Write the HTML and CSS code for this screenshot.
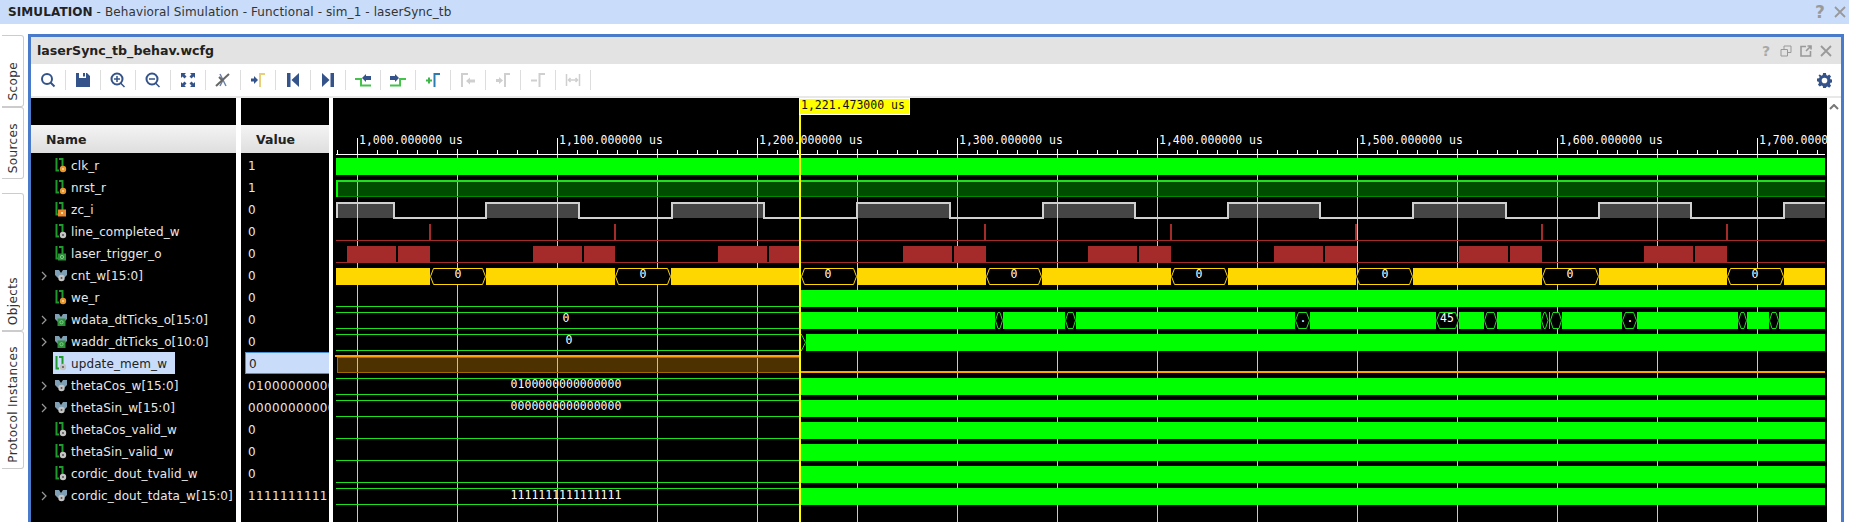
FILE: index.html
```html
<!DOCTYPE HTML>
<html>
<head>
<meta name="viewport" content="width=device-width, initial-scale=1">
<title>SIMULATION - laserSync_tb</title>
<link rel="stylesheet" href="styles.css">
</head>
<body>

<svg class="defs">
  <symbol id="sig" viewBox="0 0 14 16">
    <path d="M2.5 0v12.500H5M5 1h3.500v8" fill="none" stroke="#1f9a2c" stroke-width="2"/>
  </symbol>
  <symbol id="reg" viewBox="0 0 14 16">
    <use href="#sig" width="14" height="16"/>
    <circle cx="9" cy="11" r="3.2" fill="#e8962e"/><circle cx="9" cy="11" r="1" fill="#ffd9a0"/>
  </symbol>
  <symbol id="inp" viewBox="0 0 14 16">
    <use href="#sig" width="14" height="16"/>
    <rect x="4" y="7.5" width="8" height="7" fill="#e8862e"/><rect x="7" y="10" width="2" height="2" fill="#ffd9a0"/>
  </symbol>
  <symbol id="wire" viewBox="0 0 14 16">
    <use href="#sig" width="14" height="16"/>
    <circle cx="9" cy="11" r="3.2" fill="#c4c4c4"/><circle cx="9" cy="11" r="1" fill="#555"/>
  </symbol>
  <symbol id="out" viewBox="0 0 14 16">
    <use href="#sig" width="14" height="16"/>
    <rect x="4" y="7.5" width="8" height="7" fill="#2f8f3a"/><circle cx="8" cy="11" r="1.6" fill="none" stroke="#7fd08a"/>
  </symbol>
  <symbol id="bus" viewBox="0 0 14 16">
    <path d="M1 2h4l2 3 2-3h4v5l-3 3H4L1 7z" fill="#7fa0b4"/>
  </symbol>
  <symbol id="bus-wire" viewBox="0 0 14 16">
    <use href="#bus" width="14" height="16"/>
    <circle cx="7.5" cy="10" r="3.2" fill="#c4c4c4"/><circle cx="7.5" cy="10" r="1" fill="#555"/>
  </symbol>
  <symbol id="bus-out" viewBox="0 0 14 16">
    <use href="#bus" width="14" height="16"/>
    <rect x="3.5" y="6.5" width="8" height="7.5" fill="#2f8f3a"/><circle cx="7.5" cy="10.2" r="1.6" fill="none" stroke="#7fd08a"/>
  </symbol>
  <symbol id="chev" viewBox="0 0 6 10">
    <path d="M1 1l4 4-4 4" fill="none" stroke="#999" stroke-width="1.2"/>
  </symbol>
</svg>

<div class="topbar">
  <div class="topbar-title"><b>SIMULATION</b> - Behavioral Simulation - Functional - sim_1 - laserSync_tb</div>
  <div class="wincontrols">
    <span class="qmark big">?</span>
    <svg class="xicon" viewBox="0 0 12 12"><path d="M1 1l10 10M11 1L1 11"/></svg>
  </div>
</div>

<div class="main">
  <div class="tabs">
    <div class="tab tab-short"><span>Scope</span></div>
    <div class="tab tab-short tab-last"><span>Sources</span></div>
    <div class="tab tab-long"><span>Objects</span></div>
    <div class="tab tab-long"><span>Protocol Instances</span></div>
  </div>

  <div class="window">
    <div class="titlebar">
      <div class="filename">laserSync_tb_behav.wcfg</div>
      <div class="wincontrols small">
        <span class="qmark">?</span>
        <svg class="frameicon" viewBox="0 0 12 12"><path d="M1 4.5h6.5V11H1zM4 4.5V1h7v6.5H7.5"/></svg>
        <svg class="frameicon thick" viewBox="0 0 12 12"><path d="M6 1.5H1V11h9.5V6M6 6l5-5M7.5 1H11v3.5"/></svg>
        <svg class="xicon" viewBox="0 0 12 12"><path d="M1 1l10 10M11 1L1 11"/></svg>
      </div>
    </div>

    <div class="toolbar">
      <div class="tool"><svg viewBox="0 0 16 16"><circle cx="7" cy="7" r="5" class="ln"/><path d="M10.5 10.5l4 4" class="ln"/></svg></div>
      <div class="tool"><svg viewBox="0 0 16 16"><path d="M1 1h3v5h7V1h1l3 3v11H1z" class="fl"/><rect x="8" y="1" width="2" height="3.500" class="fl"/></svg></div>
      <div class="tool"><svg viewBox="0 0 16 16"><circle cx="7" cy="7" r="5.500" class="ln"/><path d="M10.500 11l4 4M4 7h6M7 4v6" class="ln thin"/></svg></div>
      <div class="tool"><svg viewBox="0 0 16 16"><circle cx="7" cy="7" r="5.500" class="ln"/><path d="M10.500 11l4 4M4 7h6" class="ln thin"/></svg></div>
      <div class="tool"><svg viewBox="0 0 16 16"><path d="M1 1h5L4.500 2.500 6.500 4.500 4.500 6.500 2.500 4.500 1 6zM15 1v5l-1.500-1.500-2 2-2-2 2-2L10 1zM1 15v-5l1.500 1.500 2-2 2 2-2 2L6 15zM15 15h-5l1.500-1.500-2-2 2-2 2 2L15 10z" class="fl"/></svg></div>
      <div class="tool"><svg viewBox="0 0 16 16"><path d="M5 2l3 6 3 6M8 8l-3 6" class="ln navy thin"/><path d="M1 14L14 2" class="ln grey"/><path d="M4 5l3 3" class="ln grey"/></svg></div>
      <div class="tool"><svg viewBox="0 0 16 16"><path d="M1 6.500h3V4l4 4-4 4V9.500H1z" class="fl"/><path d="M10 15V2h5" class="ln yellow"/></svg></div>
      <div class="tool"><svg viewBox="0 0 16 16"><rect x="2" y="1" width="3.500" height="14" class="fl"/><path d="M14 1v14L6.500 8z" class="fl"/></svg></div>
      <div class="tool"><svg viewBox="0 0 16 16"><path d="M2 1v14L9.500 8z" class="fl"/><rect x="10.500" y="1" width="3.500" height="14" class="fl"/></svg></div>
      <div class="tool"><svg viewBox="0 0 16 16"><path d="M0 7h6v6.500h10" class="ln green"/><path d="M7 6l4-4v2h5v4h-5v2z" class="fl"/></svg></div>
      <div class="tool"><svg viewBox="0 0 16 16"><path d="M0 13.500h10V7h6" class="ln green"/><path d="M9 6L5 2v2H0v4h5v2z" class="fl"/></svg></div>
      <div class="tool"><svg viewBox="0 0 16 16"><path d="M1 8.500h6M4 5.500v6" class="ln bright"/><path d="M9.500 15V2H15" class="ln teal"/></svg></div>
      <div class="tool"><svg viewBox="0 0 16 16"><path d="M2 15V2h6" class="ln off"/><path d="M6 9l4-3.500V7.500h5v3h-5v2z" class="fl off"/></svg></div>
      <div class="tool"><svg viewBox="0 0 16 16"><path d="M1 7h3V5l4 3.500L4 12v-2H1z" class="fl off"/><path d="M10 15V2h5" class="ln off"/></svg></div>
      <div class="tool"><svg viewBox="0 0 16 16"><path d="M1 8.500h6" class="ln off"/><path d="M9.500 15V2H15" class="ln off"/></svg></div>
      <div class="tool"><svg viewBox="0 0 16 16"><path d="M1.500 2v12M14.500 2v12M4 8h8M5.500 6L3.500 8l2 2M10.500 6l2 2-2 2" class="ln off thin"/></svg></div>
      <div class="toolbar-end">
        <svg class="gear" viewBox="0 0 16 16"><path d="M6.500 0h3l.4 2.200 1.300.6L13 1.500l2 2.100-1.200 1.800.6 1.300 2.200.4v3l-2.200.4-.6 1.300 1.200 1.800-2 2.100-1.800-1.300-1.300.6L9.500 16h-3l-.4-2.200-1.300-.6L3 14.500l-2-2.100 1.200-1.800-.6-1.300L0 8.900v-3l2.200-.4.6-1.300L1.600 2.400 3 1.500l1.800 1.300 1.300-.6zM8 5a3 3 0 100 6 3 3 0 000-6z" class="fl" fill-rule="evenodd"/></svg>
      </div>
    </div>

    <div class="content">
      <div class="col col-name">
        <div class="colhead">Name</div>
        <div class="row"><span class="exp"></span><span class="item"><svg class="sicon"><use href="#reg"/></svg>clk_r</span></div>
        <div class="row"><span class="exp"></span><span class="item"><svg class="sicon"><use href="#reg"/></svg>nrst_r</span></div>
        <div class="row"><span class="exp"></span><span class="item"><svg class="sicon"><use href="#inp"/></svg>zc_i</span></div>
        <div class="row"><span class="exp"></span><span class="item"><svg class="sicon"><use href="#wire"/></svg>line_completed_w</span></div>
        <div class="row"><span class="exp"></span><span class="item"><svg class="sicon"><use href="#out"/></svg>laser_trigger_o</span></div>
        <div class="row"><span class="exp"><svg class="chev"><use href="#chev"/></svg></span><span class="item"><svg class="sicon"><use href="#bus-wire"/></svg>cnt_w[15:0]</span></div>
        <div class="row"><span class="exp"></span><span class="item"><svg class="sicon"><use href="#reg"/></svg>we_r</span></div>
        <div class="row"><span class="exp"><svg class="chev"><use href="#chev"/></svg></span><span class="item"><svg class="sicon"><use href="#bus-out"/></svg>wdata_dtTicks_o[15:0]</span></div>
        <div class="row"><span class="exp"><svg class="chev"><use href="#chev"/></svg></span><span class="item"><svg class="sicon"><use href="#bus-out"/></svg>waddr_dtTicks_o[10:0]</span></div>
        <div class="row selected"><span class="exp"></span><span class="item"><svg class="sicon"><use href="#wire"/></svg>update_mem_w</span></div>
        <div class="row"><span class="exp"><svg class="chev"><use href="#chev"/></svg></span><span class="item"><svg class="sicon"><use href="#bus-wire"/></svg>thetaCos_w[15:0]</span></div>
        <div class="row"><span class="exp"><svg class="chev"><use href="#chev"/></svg></span><span class="item"><svg class="sicon"><use href="#bus-wire"/></svg>thetaSin_w[15:0]</span></div>
        <div class="row"><span class="exp"></span><span class="item"><svg class="sicon"><use href="#wire"/></svg>thetaCos_valid_w</span></div>
        <div class="row"><span class="exp"></span><span class="item"><svg class="sicon"><use href="#wire"/></svg>thetaSin_valid_w</span></div>
        <div class="row"><span class="exp"></span><span class="item"><svg class="sicon"><use href="#wire"/></svg>cordic_dout_tvalid_w</span></div>
        <div class="row"><span class="exp"><svg class="chev"><use href="#chev"/></svg></span><span class="item"><svg class="sicon"><use href="#bus-wire"/></svg>cordic_dout_tdata_w[15:0]</span></div>
      </div>

      <div class="col col-value">
        <div class="colhead">Value</div>
        <div class="val">1</div>
        <div class="val">1</div>
        <div class="val">0</div>
        <div class="val">0</div>
        <div class="val">0</div>
        <div class="val">0</div>
        <div class="val">0</div>
        <div class="val">0</div>
        <div class="val">0</div>
        <div class="val val-selected">0</div>
        <div class="val">0100000000000000</div>
        <div class="val">0000000000000000</div>
        <div class="val">0</div>
        <div class="val">0</div>
        <div class="val">0</div>
        <div class="val">1111111111111111</div>
      </div>

      <!-- viewBox uses the page's own coordinates, so x/y below read straight off the screenshot -->
      <svg class="wave" viewBox="333 98 1494 424" shape-rendering="crispEdges">
        <defs>
          <pattern id="grid" patternUnits="userSpaceOnUse" x="357" y="0" width="100" height="10"><rect width="1" height="10" fill="#c8c8c8"/></pattern>
          <pattern id="tick-minor" patternUnits="userSpaceOnUse" x="337" y="0" width="20" height="10"><rect width="1" height="10" fill="#fff"/></pattern>
          <pattern id="tick-mid" patternUnits="userSpaceOnUse" x="357" y="0" width="100" height="10"><rect width="1" height="10" fill="#fff"/></pattern>
          <pattern id="tick-major" patternUnits="userSpaceOnUse" x="357" y="0" width="200" height="10"><rect width="1" height="10" fill="#fff"/></pattern>
        </defs>

        <!-- ruler -->
        <rect x="336" y="154" width="1489" height="1" fill="#fff"/>
        <rect x="336" y="150" width="1489" height="4" fill="url(#tick-minor)"/>
        <rect x="336" y="149" width="1489" height="5" fill="url(#tick-mid)"/>
        <rect x="336" y="138" width="1489" height="16" fill="url(#tick-major)"/>
        <g class="rulertext">
          <text x="359" y="144">1,000.000000 us</text>
          <text x="559" y="144">1,100.000000 us</text>
          <text x="759" y="144">1,200.000000 us</text>
          <text x="959" y="144">1,300.000000 us</text>
          <text x="1159" y="144">1,400.000000 us</text>
          <text x="1359" y="144">1,500.000000 us</text>
          <text x="1559" y="144">1,600.000000 us</text>
          <text x="1759" y="144">1,700.000000 us</text>
        </g>

        <rect x="336" y="155" width="1489" height="367" fill="url(#grid)"/>

        <!-- clk_r -->
        <rect x="336" y="158" width="1489" height="17" class="hi"/>

        <!-- nrst_r -->
        <rect x="336" y="180" width="1489" height="17" class="hi-dim"/>
        <rect x="336" y="180" width="1489" height="2" class="lo"/>
        <rect x="336" y="196" width="1489" height="1" fill="#008a00"/>
        <rect x="336" y="180" width="2" height="17" class="hi"/>

        <!-- zc_i -->
        <path class="zc-fill" d="M337 218V203H394V218ZM486 218V203H579V218ZM672 218V203H764V218ZM857 218V203H950V218ZM1043 218V203H1135V218ZM1228 218V203H1320V218ZM1413 218V203H1506V218ZM1599 218V203H1691V218ZM1784 218V203H1825V218Z"/>
        <path class="zc-line" d="M337 218V203H394V218H486V203H579V218H672V203H764V218H857V203H950V218H1043V203H1135V218H1228V203H1320V218H1413V203H1506V218H1599V203H1691V218H1784V203H1825"/>

        <!-- line_completed_w -->
        <g class="maroon">
          <rect x="336" y="240" width="1489" height="1"/>
          <rect x="429" y="224" width="2" height="16"/>
          <rect x="614" y="224" width="2" height="16"/>
          <rect x="799" y="224" width="2" height="16"/>
          <rect x="984" y="224" width="2" height="16"/>
          <rect x="1170" y="224" width="2" height="16"/>
          <rect x="1355" y="224" width="2" height="16"/>
          <rect x="1541" y="224" width="2" height="16"/>
          <rect x="1726" y="224" width="2" height="16"/>
        </g>

        <!-- laser_trigger_o -->
        <g class="maroon">
          <rect x="336" y="262" width="1489" height="1"/>
          <rect x="347" y="246" width="49" height="16"/><rect x="398" y="246" width="32" height="16"/>
          <rect x="533" y="246" width="49" height="16"/><rect x="584" y="246" width="31" height="16"/>
          <rect x="718" y="246" width="49" height="16"/><rect x="769" y="246" width="31" height="16"/>
          <rect x="903" y="246" width="49" height="16"/><rect x="954" y="246" width="32" height="16"/>
          <rect x="1088" y="246" width="49" height="16"/><rect x="1139" y="246" width="32" height="16"/>
          <rect x="1274" y="246" width="49" height="16"/><rect x="1325" y="246" width="32" height="16"/>
          <rect x="1459" y="246" width="49" height="16"/><rect x="1510" y="246" width="32" height="16"/>
          <rect x="1644" y="246" width="49" height="16"/><rect x="1695" y="246" width="32" height="16"/>
        </g>

        <!-- cnt_w -->
        <g class="bus-yellow">
          <rect x="336" y="268" width="94" height="17"/>
          <rect x="486" y="268" width="129" height="17"/>
          <rect x="671" y="268" width="129" height="17"/>
          <rect x="857" y="268" width="129" height="17"/>
          <rect x="1042" y="268" width="129" height="17"/>
          <rect x="1228" y="268" width="128" height="17"/>
          <rect x="1413" y="268" width="129" height="17"/>
          <rect x="1599" y="268" width="128" height="17"/>
          <rect x="1784" y="268" width="41" height="17"/>
        </g>
        <g class="hex-yellow" shape-rendering="auto">
          <polygon points="430.500,276.500 433.500,268.500 482.500,268.500 485.500,276.500 482.500,284.500 433.500,284.500"/>
          <polygon points="615.500,276.500 618.500,268.500 667.500,268.500 670.500,276.500 667.500,284.500 618.500,284.500"/>
          <polygon points="801.500,276.500 804.500,268.500 853.500,268.500 856.500,276.500 853.500,284.500 804.500,284.500"/>
          <polygon points="986.500,276.500 989.500,268.500 1038.500,268.500 1041.500,276.500 1038.500,284.500 989.500,284.500"/>
          <polygon points="1171.500,276.500 1174.500,268.500 1224.500,268.500 1227.500,276.500 1224.500,284.500 1174.500,284.500"/>
          <polygon points="1356.500,276.500 1359.500,268.500 1409.500,268.500 1412.500,276.500 1409.500,284.500 1359.500,284.500"/>
          <polygon points="1542.500,276.500 1545.500,268.500 1595.500,268.500 1598.500,276.500 1595.500,284.500 1545.500,284.500"/>
          <polygon points="1727.500,276.500 1730.500,268.500 1780.500,268.500 1783.500,276.500 1780.500,284.500 1730.500,284.500"/>
        </g>
        <g class="bustext">
          <text x="458" y="278">0</text>
          <text x="643" y="278">0</text>
          <text x="828" y="278">0</text>
          <text x="1014" y="278">0</text>
          <text x="1199" y="278">0</text>
          <text x="1385" y="278">0</text>
          <text x="1570" y="278">0</text>
          <text x="1755" y="278">0</text>
        </g>

        <!-- we_r -->
        <rect x="336" y="306" width="464" height="1" class="lo"/>
        <rect x="801" y="290" width="1024" height="17" class="hi"/>

        <!-- wdata_dtTicks_o -->
        <rect x="336" y="312" width="463" height="1" class="lo"/>
        <rect x="336" y="328" width="463" height="1" class="lo"/>
        <g class="hi">
          <rect x="801" y="312" width="194" height="17"/>
          <rect x="1003" y="312" width="62" height="17"/>
          <rect x="1076" y="312" width="219" height="17"/>
          <rect x="1310" y="312" width="126" height="17"/>
          <rect x="1459" y="312" width="25" height="17"/>
          <rect x="1497" y="312" width="44" height="17"/>
          <rect x="1549" y="312" width="1" height="17"/>
          <rect x="1562" y="312" width="60" height="17"/>
          <rect x="1637" y="312" width="101" height="17"/>
          <rect x="1747" y="312" width="22" height="17"/>
          <rect x="1779" y="312" width="46" height="17"/>
        </g>
        <g class="hex-green" shape-rendering="auto">
          <polygon points="995.500,320.500 998,312.500 1000,312.500 1002.500,320.500 1000,328.500 998,328.500"/>
          <polygon points="1065.500,320.500 1068,312.500 1073,312.500 1075.500,320.500 1073,328.500 1068,328.500"/>
          <polygon points="1295.500,320.500 1298.500,312.500 1306.500,312.500 1309.500,320.500 1306.500,328.500 1298.500,328.500"/>
          <polygon points="1436.500,320.500 1439.500,312.500 1455.500,312.500 1458.500,320.500 1455.500,328.500 1439.500,328.500"/>
          <polygon points="1484.500,320.500 1487,312.500 1494,312.500 1496.500,320.500 1494,328.500 1487,328.500"/>
          <polygon points="1541.500,320.500 1544,312.500 1545.500,312.500 1548,320.500 1545.500,328.500 1544,328.500"/>
          <polygon points="1550.500,320.500 1553,312.500 1559,312.500 1561.500,320.500 1559,328.500 1553,328.500"/>
          <polygon points="1622.500,320.500 1625.500,312.500 1633.500,312.500 1636.500,320.500 1633.500,328.500 1625.500,328.500"/>
          <polygon points="1738.500,320.500 1741,312.500 1744,312.500 1746.500,320.500 1744,328.500 1741,328.500"/>
          <polygon points="1769.500,320.500 1772,312.500 1776,312.500 1778.500,320.500 1776,328.500 1772,328.500"/>
        </g>
        <g class="bustext">
          <text x="566" y="322">0</text>
          <text x="1303" y="322">.</text>
          <text x="1447" y="322">45</text>
          <text x="1630" y="322">.</text>
        </g>

        <!-- waddr_dtTicks_o -->
        <rect x="336" y="334" width="466" height="1" class="lo"/>
        <rect x="336" y="350" width="466" height="1" class="lo"/>
        <path class="hex-tail" d="M801.500 334.500L805.500 342.500L801.500 350.500" shape-rendering="auto"/>
        <rect x="806" y="334" width="1019" height="17" class="hi"/>
        <text class="bustext" x="569" y="344">0</text>

        <!-- update_mem_w -->
        <rect x="337.500" y="357.500" width="462" height="15" class="sel-fill"/>
        <rect x="335" y="355" width="465" height="2" class="sel-line"/>
        <rect x="801" y="371" width="1024" height="2" class="sel-line"/>

        <!-- thetaCos_w, thetaSin_w -->
        <rect x="336" y="378" width="464" height="1" class="lo"/>
        <rect x="336" y="394" width="464" height="1" class="lo"/>
        <rect x="801" y="378" width="1024" height="17" class="hi"/>
        <text class="bustext" x="566" y="388">0100000000000000</text>
        <rect x="336" y="400" width="464" height="1" class="lo"/>
        <rect x="336" y="416" width="464" height="1" class="lo"/>
        <rect x="801" y="400" width="1024" height="17" class="hi"/>
        <text class="bustext" x="566" y="410">0000000000000000</text>

        <!-- valid flags -->
        <rect x="336" y="438" width="464" height="1" class="lo"/>
        <rect x="801" y="422" width="1024" height="17" class="hi"/>
        <rect x="336" y="460" width="464" height="1" class="lo"/>
        <rect x="801" y="444" width="1024" height="17" class="hi"/>
        <rect x="336" y="482" width="464" height="1" class="lo"/>
        <rect x="801" y="466" width="1024" height="17" class="hi"/>

        <!-- cordic_dout_tdata_w -->
        <rect x="336" y="488" width="464" height="1" class="lo"/>
        <rect x="336" y="504" width="464" height="1" class="lo"/>
        <rect x="801" y="488" width="1024" height="17" class="hi"/>
        <text class="bustext" x="566" y="499">1111111111111111</text>

        <!-- cursor -->
        <rect x="799" y="98" width="2" height="424" fill="#ffff00"/>
        <rect x="799.500" y="98.500" width="110" height="16" class="cursor-tag"/>
        <text class="cursor-text" x="801" y="109">1,221.473000 us</text>
      </svg>

      <div class="scrollbar">
        <svg viewBox="0 0 10 6"><path d="M1 5l4-4 4 4"/></svg>
      </div>
    </div>
  </div>
</div>

</body>
</html>
```

FILE: styles.css
```css
body {
  margin: 0;
  height: 522px;
  overflow: hidden;
  background: #fff;
  font-family: "DejaVu Sans", sans-serif;
  font-size: 12px;
  color: #333;
}
.defs {
  display: none;
}
.topbar {
  height: 24px;
  background: #c9ddfb;
  display: flex;
  align-items: center;
  justify-content: space-between;
  padding: 0 3px 0 8px;
}
.topbar-title {
  letter-spacing: 0.1px;
}
.topbar-title b {
  color: #222;
}
.wincontrols {
  display: flex;
  align-items: center;
  gap: 8px;
}
.wincontrols.small {
  gap: 8px;
  margin-right: 9px;
}
.qmark {
  width: 12px;
  text-align: center;
  font-weight: bold;
  font-size: 14px;
  color: #a8a8a8;
}
.qmark.big {
  font-size: 17px;
  color: #999;
}
.xicon {
  width: 12px;
  height: 12px;
  fill: none;
  stroke: #999;
  stroke-width: 1.8;
}
.frameicon {
  width: 12px;
  height: 12px;
  fill: none;
  stroke: #999;
  stroke-width: 1;
}
.frameicon.thick {
  stroke-width: 1.6;
}

.main {
  display: flex;
  padding-top: 10px;
  height: 488px;
}
.tabs {
  width: 22px;
  margin: 1px 4px 0 2px;
  display: flex;
  flex-direction: column;
}
.tab {
  box-sizing: border-box;
  display: flex;
  align-items: flex-end;
  justify-content: center;
  padding-bottom: 5px;
  background: #fff;
  border: 1px solid #ccc;
  border-left: none;
  border-radius: 0 3px 3px 0;
  letter-spacing: 0.4px;
}
.tab span {
  writing-mode: vertical-rl;
  transform: rotate(180deg);
}
.tab-short {
  height: 72px;
}
.tab-last {
  margin-bottom: 14px;
}
.tab-long {
  height: 138px;
}

.window {
  width: 1810px;
  border: solid #4a7bcb;
  border-width: 3px 3px 0;
  display: flex;
  flex-direction: column;
}
.titlebar {
  height: 27px;
  flex: none;
  background: #e3e3e3;
  display: flex;
  align-items: center;
  justify-content: space-between;
}
.filename {
  padding-left: 6px;
  font-size: 12.6px;
  font-weight: bold;
  color: #222;
}
.toolbar {
  height: 32px;
  flex: none;
  display: flex;
  align-items: center;
  border-bottom: 2px solid #e8e8e8;
}
.tool {
  box-sizing: border-box;
  width: 35px;
  height: 20px;
  border-right: 1px solid #ddd;
  display: flex;
  align-items: center;
  justify-content: center;
}
.tool svg {
  width: 16px;
  height: 16px;
}
.toolbar-end {
  margin-left: auto;
  margin-right: 9px;
  display: flex;
}
.gear {
  width: 15px;
  height: 15px;
}
.fl {
  fill: #34538a;
}
.fl.off {
  fill: #cfcfcf;
}
.ln {
  fill: none;
  stroke: #34538a;
  stroke-width: 2;
}
.ln.thin {
  stroke-width: 1.5;
}
.ln.navy {
  stroke: #6f83a8;
}
.ln.grey {
  stroke: #666;
}
.ln.yellow {
  stroke: #e8cf78;
}
.ln.green {
  stroke: #45c24a;
}
.ln.bright {
  stroke: #3db54a;
}
.ln.teal {
  stroke: #2a7cb0;
}
.ln.off {
  stroke: #cfcfcf;
}

.content {
  flex: 1;
  display: flex;
  min-height: 0;
}
.col {
  background: #000;
  color: #e8e8e8;
  padding-top: 27px;
}
.col-name {
  width: 205px;
  margin-right: 5px;
}
.col-value {
  width: 88px;
  margin-right: 4px;
}
.colhead {
  height: 28px;
  margin-bottom: 1px;
  padding-left: 15px;
  display: flex;
  align-items: center;
  font-size: 12.5px;
  font-weight: bold;
  color: #222;
  background: linear-gradient(#f4f4f4, #dedede);
}
.row {
  height: 22px;
  display: flex;
  align-items: center;
  padding-left: 10px;
  white-space: nowrap;
  letter-spacing: 0.1px;
}
.exp {
  width: 12px;
  flex: none;
  display: flex;
  padding-top: 2px;
}
.chev {
  width: 6px;
  height: 10px;
}
.item {
  box-sizing: border-box;
  height: 22px;
  display: flex;
  align-items: center;
  padding: 2px 8px 0 1px;
}
.sicon {
  width: 14px;
  height: 16px;
  margin-right: 3px;
  flex: none;
}
.selected .item {
  background: #c9ddfb;
  color: #222;
}
.val {
  height: 22px;
  line-height: 24px;
  padding-left: 7px;
  overflow: hidden;
  white-space: nowrap;
  letter-spacing: 0.35px;
}
.val-selected {
  box-sizing: border-box;
  margin-left: 4px;
  padding-left: 3px;
  line-height: 22px;
  color: #222;
  background: #c9ddfb;
  border: solid #4a8fd6;
  border-width: 1px 0 1px 1px;
}

.wave {
  width: 1494px;
  height: 424px;
  flex: none;
  background: #000;
}
.rulertext text, .bustext, .bustext text {
  font-family: "DejaVu Sans Mono", monospace;
  font-size: 11.5px;
  fill: #fff;
}
.bustext, .bustext text {
  text-anchor: middle;
}
.hi {
  fill: #00ff00;
}
.lo {
  fill: #1fe01f;
}
.hi-dim {
  fill: rgba(0, 255, 0, 0.3);
}
.zc-fill {
  fill: rgba(255, 255, 255, 0.27);
}
.zc-line {
  fill: none;
  stroke: #d0d0d0;
  stroke-width: 2;
}
.maroon {
  fill: #a52a2a;
}
.bus-yellow {
  fill: #ffd700;
}
.hex-yellow polygon {
  fill: #000;
  stroke: #ffd700;
  stroke-width: 1;
}
.hex-green polygon {
  fill: #000;
  stroke: #1fe01f;
  stroke-width: 1;
}
.hex-tail {
  fill: none;
  stroke: #1fe01f;
}
.sel-fill {
  fill: rgba(255, 165, 0, 0.3);
  stroke: #a06a00;
}
.sel-line {
  fill: #ffa500;
}
.cursor-tag {
  fill: #ffff00;
  stroke: #fff;
}
.cursor-text {
  font-family: "DejaVu Sans Mono", monospace;
  font-size: 11.5px;
  fill: #111;
}
.scrollbar {
  width: 14px;
  flex: none;
  padding-top: 6px;
  display: flex;
  justify-content: center;
  align-items: flex-start;
}
.scrollbar svg {
  width: 10px;
  height: 6px;
  fill: none;
  stroke: #777;
  stroke-width: 2;
}
```
